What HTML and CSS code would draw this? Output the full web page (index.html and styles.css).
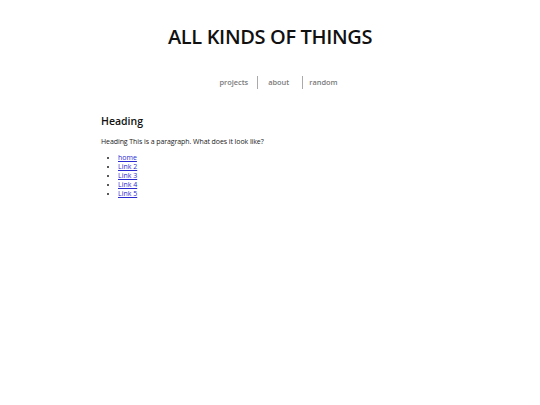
FILE: index.html
```html
<!DOCTYPE html>
<html>
<head>
<meta charset="utf-8">
<link rel="stylesheet" href="styles.css">
</head>
<body>
<header class="site-header">
  <h1 class="site-title">ALL KINDS OF THINGS</h1>
  <nav class="site-nav">
    <a class="nav-item nav-first" href="#">projects</a>
    <a class="nav-item nav-mid" href="#">about</a>
    <a class="nav-item nav-last" href="#">random</a>
  </nav>
</header>
<main class="content">
  <h2 class="heading">Heading</h2>
  <p class="para">Heading This is a paragraph. What does it look like?</p>
  <ul class="links">
    <li><a href="#">home</a></li>
    <li><a href="#">Link 2</a></li>
    <li><a href="#">Link 3</a></li>
    <li><a href="#">Link 4</a></li>
    <li><a href="#">Link 5</a></li>
  </ul>
</main>
</body>
</html>
```
FILE: styles.css
```css
html, body {
  margin: 0;
  padding: 0;
  background: #fff;
}
body {
  font-family: "Open Sans", "DejaVu Sans", sans-serif;
  color: #222;
}
.site-header {
  display: flex;
  flex-direction: column;
  align-items: center;
}
.site-title {
  margin: 22px 0 0;
  font-size: 20px;
  line-height: 30px;
  font-weight: 600;
  color: #111;
  letter-spacing: -0.35px;
}
.site-nav {
  display: flex;
  margin-top: 24px;
  margin-left: 17px;
}
.nav-item {
  font-size: 7.4px;
  line-height: 13px;
  font-weight: 600;
  color: #7a7a7a;
  text-decoration: none;
}
.nav-first {
  padding: 0 9px 0 0;
}
.nav-mid {
  padding: 0 13px 0 10px;
  border-left: 1px solid #aaa;
}
.nav-last {
  padding: 0 0 0 6px;
  border-left: 1px solid #aaa;
}
.content {
  width: 338px;
  margin: 24px auto 0;
}
.heading {
  margin: 0;
  font-size: 10.5px;
  line-height: 16px;
  font-weight: 600;
  color: #111;
}
.para {
  margin: 7px 0 0;
  font-size: 7px;
  line-height: 11px;
  color: #222;
  letter-spacing: -0.08px;
}
.links {
  margin: 6px 0 0;
  padding-left: 17px;
  font-size: 7px;
  line-height: 9px;
}
.links a {
  color: #2b2bd0;
}
```
